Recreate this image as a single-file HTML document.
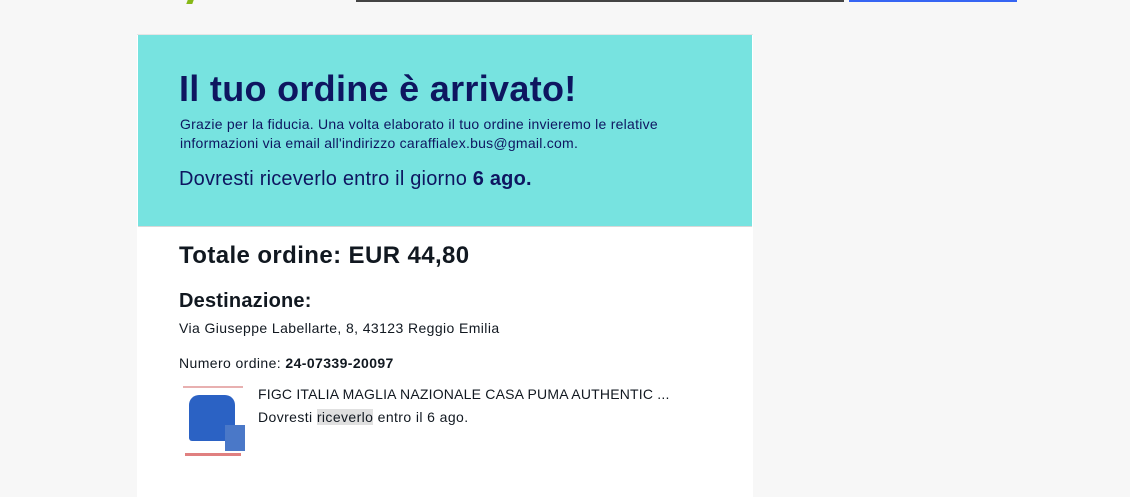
<!DOCTYPE html>
<html><head><meta charset="utf-8"><style>
body{margin:0;width:1130px;height:496px;background:#f7f7f7;font-family:"Liberation Sans",sans-serif;overflow:hidden;position:relative;color:#111820}
.a{position:absolute;white-space:nowrap}
</style></head><body>
<div class="a" style="left:356px;top:0;width:488px;height:2px;background:#444"></div>
<div class="a" style="left:849px;top:0;width:168px;height:2px;background:#3665f3"></div>
<div class="a" style="left:187px;top:0;width:6px;height:4px;background:#86b817;transform:skewX(-20deg)"></div>
<div class="a" style="left:137px;top:34px;width:616px;height:462px;background:#fff;border-top:1px solid #e5e5e5"></div>
<div class="a" style="left:138px;top:35px;width:614px;height:191px;background:#77e3e0;color:#0e1660;border-bottom:1px solid #d8d8d8">
 <div class="a" style="left:41px;top:33px;font-size:36px;font-weight:bold;letter-spacing:0.3px">Il tuo ordine è arrivato!</div>
 <div class="a" style="left:42px;top:80px;font-size:14px;line-height:19px;letter-spacing:0.25px">Grazie per la fiducia. Una volta elaborato il tuo ordine invieremo le relative<br>informazioni via email all'indirizzo caraffialex.bus@gmail.com.</div>
 <div class="a" style="left:41px;top:133px;font-size:20px;letter-spacing:0.2px">Dovresti riceverlo entro il giorno <b>6 ago.</b></div>
</div>
<div class="a" style="left:179px;top:242px;font-size:24px;font-weight:bold;letter-spacing:0.4px">Totale ordine: EUR 44,80</div>
<div class="a" style="left:179px;top:290px;font-size:20px;font-weight:bold;letter-spacing:0.2px">Destinazione:</div>
<div class="a" style="left:179px;top:320px;font-size:14px;letter-spacing:0.4px">Via Giuseppe Labellarte, 8, 43123 Reggio Emilia</div>
<div class="a" style="left:179px;top:355px;font-size:14px;letter-spacing:0.4px">Numero ordine: <b>24-07339-20097</b></div>
<div class="a" style="left:179px;top:383px;width:70px;height:80px;background:#fff">
 <div class="a" style="left:10px;top:12px;width:46px;height:46px;background:#2b62c4;border-radius:10px 10px 3px 3px"></div>
 <div class="a" style="left:46px;top:42px;width:20px;height:26px;background:#4a78c8"></div>
 <div class="a" style="left:4px;top:3px;width:60px;height:2px;background:#e8b0b0"></div>
 <div class="a" style="left:6px;top:70px;width:56px;height:3px;background:#e08080"></div>
</div>
<div class="a" style="left:258px;top:386px;font-size:14px;letter-spacing:0.2px">FIGC ITALIA MAGLIA NAZIONALE CASA PUMA AUTHENTIC ...</div>
<div class="a" style="left:258px;top:409px;font-size:14px;letter-spacing:0.4px">Dovresti <span style="background:#e0e0e0">riceverlo</span> entro il 6 ago.</div>
</body></html>
